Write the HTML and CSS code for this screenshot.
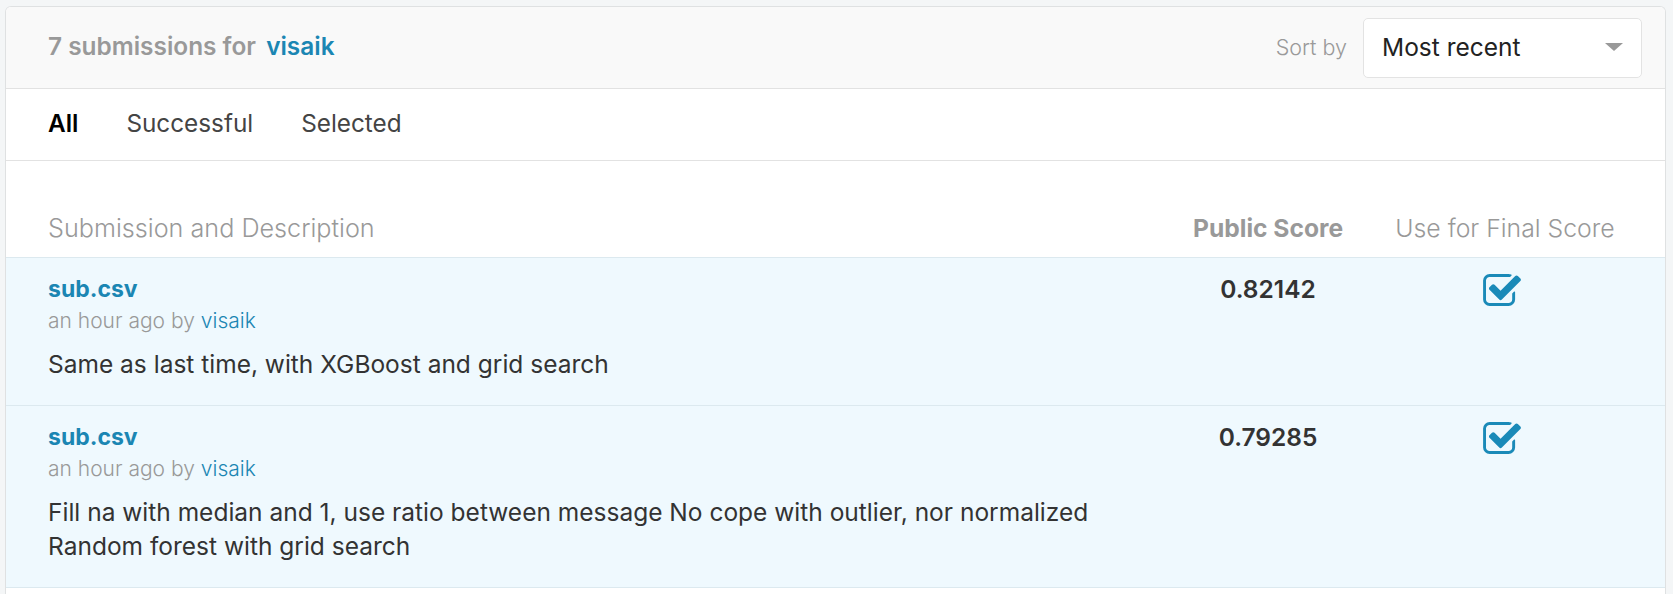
FILE: index.html
```html
<!DOCTYPE html>
<html>
<head>
<meta charset="utf-8">
<link rel="stylesheet" href="styles.css">
</head>
<body>
<div class="card">
  <div class="card-header">
    <div class="count">7 submissions for <a class="user" href="#">visaik</a></div>
    <div class="sort">
      <span class="sort-label">Sort by</span>
      <div class="select">
        <span class="select-value">Most recent</span>
        <span class="caret"></span>
      </div>
    </div>
  </div>
  <div class="tabs">
    <span class="tab active">All</span>
    <span class="tab">Successful</span>
    <span class="tab">Selected</span>
  </div>
  <div class="grid head">
    <div class="col-desc">Submission and Description</div>
    <div class="col-score">Public Score</div>
    <div class="col-use">Use for Final Score</div>
  </div>
  <div class="grid row">
    <div class="col-desc">
      <a class="file" href="#">sub.csv</a>
      <div class="meta">an hour ago by <a class="meta-user" href="#">visaik</a></div>
      <div class="desc">Same as last time, with XGBoost and grid search</div>
    </div>
    <div class="col-score score">0.82142</div>
    <div class="col-use">
      <svg class="check" viewBox="64 128 1663 1408" width="38" height="32"><path d="M1472 930v318q0 119-84.5 203.5t-203.5 84.5h-832q-119 0-203.5-84.5t-84.5-203.5v-832q0-119 84.5-203.5t203.5-84.5h832q63 0 117 25 15 7 18 23 3 17-9 29l-49 49q-10 10-23 10-3 0-9-2-23-6-45-6h-832q-66 0-113 47t-47 113v832q0 66 47 113t113 47h832q66 0 113-47t47-113v-254q0-13 9-22l64-64q10-10 23-10 6 0 12 3 20 8 20 29zm231-489l-814 814q-24 24-57 24t-57-24l-430-430q-24-24-24-57t24-57l110-110q24-24 57-24t57 24l263 263 647-647q24-24 57-24t57 24l110 110q24 24 24 57t-24 57z"/></svg>
    </div>
  </div>
  <div class="grid row">
    <div class="col-desc">
      <a class="file" href="#">sub.csv</a>
      <div class="meta">an hour ago by <a class="meta-user" href="#">visaik</a></div>
      <div class="desc">Fill na with median and 1, use ratio between message No cope with outlier, nor normalized<br>Random forest with grid search</div>
    </div>
    <div class="col-score score">0.79285</div>
    <div class="col-use">
      <svg class="check" viewBox="64 128 1663 1408" width="38" height="32"><path d="M1472 930v318q0 119-84.5 203.5t-203.5 84.5h-832q-119 0-203.5-84.5t-84.5-203.5v-832q0-119 84.5-203.5t203.5-84.5h832q63 0 117 25 15 7 18 23 3 17-9 29l-49 49q-10 10-23 10-3 0-9-2-23-6-45-6h-832q-66 0-113 47t-47 113v832q0 66 47 113t113 47h832q66 0 113-47t47-113v-254q0-13 9-22l64-64q10-10 23-10 6 0 12 3 20 8 20 29zm231-489l-814 814q-24 24-57 24t-57-24l-430-430q-24-24-24-57t24-57l110-110q24-24 57-24t57 24l263 263 647-647q24-24 57-24t57 24l110 110q24 24 24 57t-24 57z"/></svg>
    </div>
  </div>
  <div class="after"></div>
</div>
</body>
</html>
```
FILE: styles.css
```css
html, body {
  margin: 0;
  padding: 0;
  background: #f4f6f7;
  font-family: "Inter", "Liberation Sans", sans-serif;
  height: 594px;
  overflow: hidden;
}
a { text-decoration: none; }
.card {
  margin: 6px 0 0 5px;
  width: 1659px;
  background: #fff;
  border: 1px solid #dfe1e2;
  border-bottom: none;
  border-radius: 6px 6px 0 0;
  overflow: hidden;
}
.card-header {
  height: 81px;
  background: #f9f9f9;
  border-bottom: 1px solid #e2e2e2;
  display: flex;
  align-items: center;
  justify-content: space-between;
  padding: 0 23px 0 42px;
}
.count {
  font-size: 24.4px;
  font-weight: 600;
  color: #999;
  padding-bottom: 4px;
}
.user { color: #1b86b3; margin-left: 4px; }
.sort { display: flex; align-items: center; }
.sort-label {
  font-size: 21.5px;
  color: #9a9a9a;
  font-weight: 300;
  padding-bottom: 2px;
}
.select {
  margin-left: 16px;
  width: 279px;
  height: 60px;
  box-sizing: border-box;
  background: #fff;
  border: 1px solid #e3e3e3;
  border-radius: 5px;
  display: flex;
  align-items: center;
  justify-content: space-between;
  padding: 0 18px 2px 18px;
}
.select-value { font-size: 24.5px; color: #222; }
.caret {
  width: 0; height: 0;
  border-left: 9px solid transparent;
  border-right: 9px solid transparent;
  border-top: 8px solid #999;
}
.tabs {
  height: 72px;
  box-sizing: border-box;
  padding-bottom: 4px;
  border-bottom: 1px solid #e2e2e2;
  display: flex;
  align-items: center;
  padding-left: 42px;
  gap: 48px;
}
.tab { font-size: 24.3px; color: #444; }
.tab.active { color: #000; font-weight: 600; }
.grid {
  display: grid;
  grid-template-columns: 1fr 150px 220px;
  column-gap: 52px;
  padding: 0 50px 0 42px;
}
.head {
  height: 96px;
  align-items: end;
}
.head > div {
  line-height: 30px;
  padding-bottom: 14px;
  font-size: 24.8px;
  color: #999;
  font-weight: 300;
  white-space: nowrap;
}
.head .col-desc { font-size: 25.2px; }
.head .col-score { font-weight: 700; text-align: center; font-size: 24.6px; }
.head .col-use { text-align: center; }
.row {
  background: #eff9fe;
  border-top: 1px solid #dce9ef;
  padding-top: 16px;
  padding-bottom: 24px;
}
.after {
  border-top: 1px solid #dce9ef;
  height: 20px;
}
.file {
  display: block;
  font-size: 23px;
  font-weight: 700;
  color: #1b86b3;
  line-height: 30px;
}
.meta {
  margin-top: 2px;
  line-height: 30px;
  font-size: 21px;
  color: #999;
  font-weight: 300;
}
.meta-user { color: #1b86b3; }
.desc {
  margin-top: 11px;
  line-height: 34px;
  font-size: 24.5px;
  color: #333;
}
.score {
  text-align: center;
  line-height: 30px;
  font-size: 24.5px;
  font-weight: 600;
  color: #333;
}
.col-use { text-align: center; }
.check {
  fill: #1a8ab8;
  display: block;
  margin: 0 auto;
  position: relative;
  left: -3px;
}
```
